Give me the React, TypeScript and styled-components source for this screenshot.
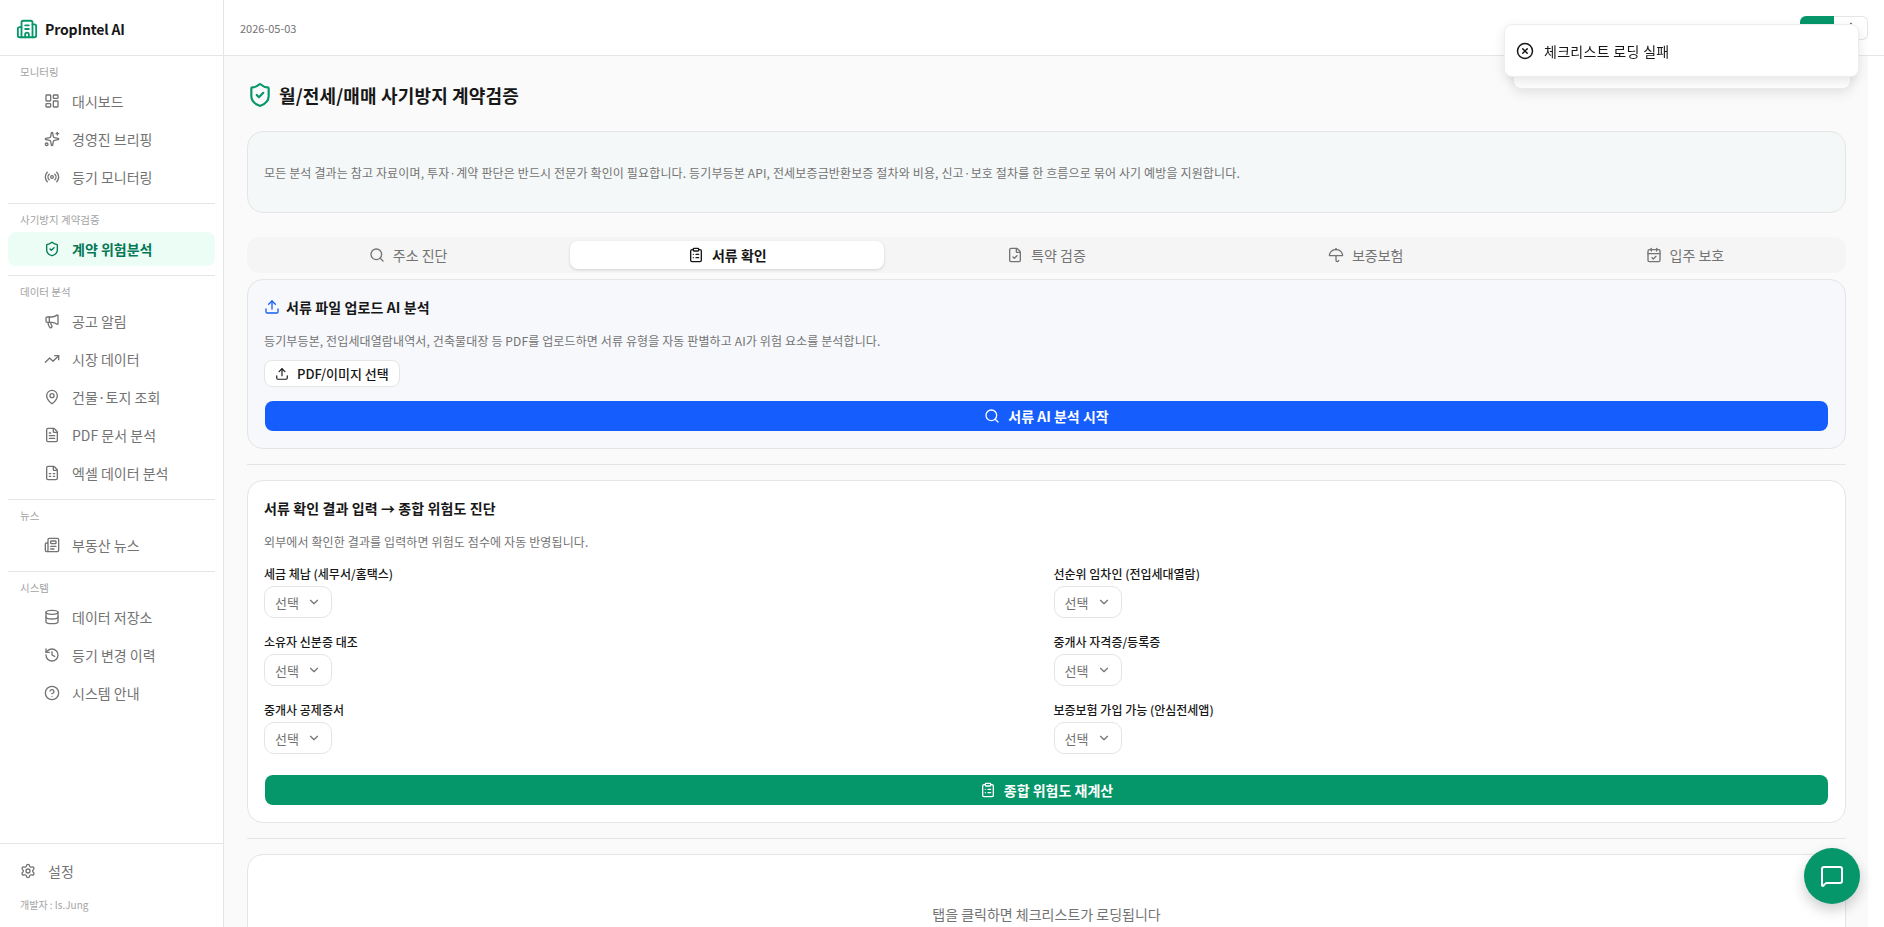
import styled, { createGlobalStyle } from 'styled-components'
import {
  Building2,
  CalendarCheck,
  ChevronDown,
  CircleHelp,
  CircleX,
  ClipboardList,
  Database,
  EllipsisVertical,
  FileCheck,
  FileSpreadsheet,
  FileText,
  History,
  LayoutDashboard,
  MapPin,
  Megaphone,
  MessageSquare,
  Newspaper,
  Radio,
  Search,
  Settings,
  ShieldCheck,
  Sparkles,
  TrendingUp,
  Umbrella,
  Upload,
} from 'lucide-react'

const GlobalStyle = createGlobalStyle`
  * {
    box-sizing: border-box;
  }
  html, body {
    margin: 0;
    height: 100%;
    overflow: hidden;
  }
  body {
    font-family: 'Noto Sans CJK KR', 'Noto Sans', sans-serif;
    background: #fff;
    color: #171717;
  }
`

const Shell = styled.div`
  display: flex;
  width: 1884px;
  height: 927px;
`

const Sidebar = styled.aside`
  flex: 0 0 224px;
  display: flex;
  flex-direction: column;
  border-right: 1px solid #e5e5e5;
  background: #fff;
`

const Brand = styled.div`
  flex: 0 0 56px;
  display: flex;
  align-items: center;
  gap: 7px;
  padding: 2px 0 0 16px;
  border-bottom: 1px solid #e5e5e5;
  font-size: 14px;
  font-weight: 600;
  letter-spacing: -0.15px;
  color: #171717;
  svg {
    color: #059669;
  }
`

const Nav = styled.nav`
  flex: 1;
`

const NavGroup = styled.div`
  display: flex;
  flex-direction: column;
  gap: 4px;
  margin: 0 8px;
  padding: 8px 0 9px;
  border-bottom: 1px solid #e5e5e5;
  &:last-child {
    border-bottom: none;
  }
`

const GroupLabel = styled.div`
  height: 16px;
  padding-left: 12px;
  font-size: 10.5px;
  line-height: 16px;
  color: #a3a3a3;
`

const NavItem = styled.a<{ $active?: boolean }>`
  display: flex;
  align-items: center;
  gap: 12px;
  height: 34px;
  padding-left: 36px;
  border-radius: 8px;
  font-size: 14px;
  font-weight: ${({ $active }) => ($active ? 600 : 400)};
  color: ${({ $active }) => ($active ? '#047857' : '#737373')};
  background: ${({ $active }) => ($active ? '#ecfdf5' : 'transparent')};
`

const SidebarFooter = styled.div`
  flex: 0 0 84px;
  padding: 10px 20px 0;
  border-top: 1px solid #e5e5e5;
`

const SettingsRow = styled.div`
  display: flex;
  align-items: center;
  gap: 12px;
  height: 34px;
  font-size: 14px;
  color: #737373;
`

const DevNote = styled.div`
  margin-top: 9px;
  font-size: 10px;
  line-height: 16px;
  color: #a3a3a3;
`

const Content = styled.div`
  flex: 1;
  min-width: 0;
  display: flex;
  flex-direction: column;
`

const TopBar = styled.header`
  flex: 0 0 56px;
  display: flex;
  align-items: flex-start;
  justify-content: space-between;
  padding: 16px 16px 0 16px;
  border-bottom: 1px solid #e5e5e5;
  background: #fff;
`

const DateText = styled.span`
  font-size: 11px;
  line-height: 24px;
  color: #737373;
`

const TopActions = styled.div`
  display: flex;
  height: 24px;
`

const GreenChip = styled.div`
  width: 34px;
  background: #059669;
  border-radius: 6px 0 0 6px;
`

const WhiteChip = styled.div`
  width: 34px;
  display: flex;
  align-items: center;
  justify-content: center;
  border: 1px solid #e5e5e5;
  border-left: none;
  border-radius: 0 6px 6px 0;
  color: #737373;
`

/* the right margin keeps the white strip where the page scrollbar sat */
const Main = styled.main`
  flex: 1;
  min-height: 0;
  overflow: hidden;
  margin-right: 16px;
  padding: 28px 22px 32px 23px;
  background: #fafafa;
`

const PageTitle = styled.h1`
  display: flex;
  align-items: center;
  gap: 6px;
  height: 22px;
  margin: 0;
  font-size: 18px;
  font-weight: 700;
  letter-spacing: 0.15px;
  color: #171717;
  svg {
    flex: none;
    color: #059669;
  }
`

const Notice = styled.div`
  display: flex;
  align-items: center;
  height: 82px;
  margin: 25px 0 24px;
  padding: 0 16px;
  border: 1px solid #e5e5e5;
  border-radius: 16px;
  background: #f5f8f8;
  font-size: 12px;
  letter-spacing: 0.14px;
  color: #737373;
`

const TabBar = styled.div`
  display: grid;
  grid-template-columns: repeat(5, 1fr);
  gap: 5px;
  height: 36px;
  padding: 4px;
  margin-bottom: 6px;
  border-radius: 12px;
  background: #f5f5f5;
`

const Tab = styled.div<{ $active?: boolean }>`
  display: flex;
  align-items: center;
  justify-content: center;
  gap: 8px;
  border-radius: 8px;
  font-size: 14px;
  font-weight: ${({ $active }) => ($active ? 600 : 400)};
  color: ${({ $active }) => ($active ? '#171717' : '#737373')};
  background: ${({ $active }) => ($active ? '#fff' : 'transparent')};
  box-shadow: ${({ $active }) => ($active ? '0 1px 3px rgba(0, 0, 0, 0.15)' : 'none')};
`

const Card = styled.section<{ $tint?: boolean }>`
  padding: 17px 16px;
  border: 1px solid #e5e5e5;
  border-radius: 16px;
  background: ${({ $tint }) => ($tint ? '#f6f8fc' : '#fff')};
`

const Divider = styled.hr`
  margin: 15px 0;
  border: none;
  border-top: 1px solid #e5e5e5;
`

const CardTitle = styled.h2`
  display: flex;
  align-items: center;
  gap: 6px;
  height: 20px;
  margin: 0;
  font-size: 14px;
  font-weight: 600;
  letter-spacing: 0.1px;
  color: #171717;
  svg {
    color: #155dfc;
  }
`

const CardText = styled.p`
  margin: 15px 0 0;
  font-size: 12px;
  line-height: 18px;
  letter-spacing: 0.12px;
  color: #737373;
`

const PickButton = styled.button`
  display: flex;
  align-items: center;
  gap: 8px;
  height: 27px;
  margin-top: 10px;
  padding: 0 10px;
  border: 1px solid #e5e5e5;
  border-radius: 8px;
  background: #fff;
  font-family: inherit;
  font-size: 13px;
  font-weight: 500;
  color: #171717;
`

const WideButton = styled.button<{ $color: string }>`
  display: flex;
  align-items: center;
  justify-content: center;
  gap: 8px;
  width: calc(100% - 2px);
  height: 30px;
  margin: 14px 1px 0;
  border: none;
  border-radius: 8px;
  background: ${({ $color }) => $color};
  font-family: inherit;
  font-size: 14px;
  font-weight: 600;
  color: #fff;
`

const CheckGrid = styled.div`
  display: grid;
  grid-template-columns: 1fr 1fr;
  column-gap: 14px;
  row-gap: 15px;
  margin: 14px 0 21px;
  & + ${WideButton} {
    margin-top: 0;
  }
`

const Field = styled.div`
  display: flex;
  flex-direction: column;
  align-items: flex-start;
  gap: 3px;
`

const FieldLabel = styled.label`
  font-size: 12px;
  font-weight: 500;
  line-height: 18px;
  color: #171717;
`

const SelectBox = styled.div`
  display: flex;
  align-items: center;
  justify-content: space-between;
  width: 68px;
  height: 32px;
  padding: 0 10px;
  border: 1px solid #e5e5e5;
  border-radius: 10px;
  background: #fff;
  font-size: 13px;
  color: #737373;
`

const EmptyCard = styled.section`
  padding: 49px 16px;
  border: 1px solid #e5e5e5;
  border-radius: 16px;
  background: #fff;
  text-align: center;
  font-size: 14px;
  line-height: 20px;
  color: #737373;
`

const ChatButton = styled.button`
  position: fixed;
  right: 24px;
  bottom: 23px;
  display: flex;
  align-items: center;
  justify-content: center;
  width: 56px;
  height: 56px;
  border: none;
  border-radius: 50%;
  background: #059669;
  color: #fff;
  box-shadow: 0 6px 14px rgba(0, 0, 0, 0.2);
`

const ToastBack = styled.div`
  position: fixed;
  top: 40px;
  left: 1513px;
  width: 338px;
  height: 49px;
  border: 1px solid #ededed;
  border-radius: 8px;
  background: #fff;
  box-shadow: 0 4px 12px rgba(0, 0, 0, 0.1);
`

const Toast = styled.div`
  position: fixed;
  top: 24px;
  left: 1504px;
  display: flex;
  align-items: center;
  gap: 10px;
  width: 355px;
  height: 53px;
  padding: 0 11px;
  border: 1px solid #ededed;
  border-radius: 8px;
  background: #fff;
  box-shadow: 0 4px 12px rgba(0, 0, 0, 0.1);
  font-size: 14px;
  letter-spacing: 0.3px;
  color: #171717;
`

const navGroups = [
  {
    label: '모니터링',
    items: [
      { name: '대시보드', icon: LayoutDashboard },
      { name: '경영진 브리핑', icon: Sparkles },
      { name: '등기 모니터링', icon: Radio },
    ],
  },
  {
    label: '사기방지 계약검증',
    items: [{ name: '계약 위험분석', icon: ShieldCheck, active: true }],
  },
  {
    label: '데이터 분석',
    items: [
      { name: '공고 알림', icon: Megaphone },
      { name: '시장 데이터', icon: TrendingUp },
      { name: '건물·토지 조회', icon: MapPin },
      { name: 'PDF 문서 분석', icon: FileText },
      { name: '엑셀 데이터 분석', icon: FileSpreadsheet },
    ],
  },
  {
    label: '뉴스',
    items: [{ name: '부동산 뉴스', icon: Newspaper }],
  },
  {
    label: '시스템',
    items: [
      { name: '데이터 저장소', icon: Database },
      { name: '등기 변경 이력', icon: History },
      { name: '시스템 안내', icon: CircleHelp },
    ],
  },
]

const tabs = [
  { name: '주소 진단', icon: Search },
  { name: '서류 확인', icon: ClipboardList, active: true },
  { name: '특약 검증', icon: FileCheck },
  { name: '보증보험', icon: Umbrella },
  { name: '입주 보호', icon: CalendarCheck },
]

const fields = [
  '세금 체납 (세무서/홈택스)',
  '선순위 임차인 (전입세대열람)',
  '소유자 신분증 대조',
  '중개사 자격증/등록증',
  '중개사 공제증서',
  '보증보험 가입 가능 (안심전세앱)',
]

export default function App() {
  return (
    <>
      <GlobalStyle />
      <Shell>
        <Sidebar>
          <Brand>
            <Building2 size={22} />
            PropIntel AI
          </Brand>
          <Nav>
            {navGroups.map((group) => (
              <NavGroup key={group.label}>
                <GroupLabel>{group.label}</GroupLabel>
                {group.items.map((item) => (
                  <NavItem key={item.name} $active={item.active}>
                    <item.icon size={16} />
                    {item.name}
                  </NavItem>
                ))}
              </NavGroup>
            ))}
          </Nav>
          <SidebarFooter>
            <SettingsRow>
              <Settings size={16} />
              설정
            </SettingsRow>
            <DevNote>개발자 : Is.Jung</DevNote>
          </SidebarFooter>
        </Sidebar>
        <Content>
          <TopBar>
            <DateText>2026-05-03</DateText>
            <TopActions>
              <GreenChip />
              <WhiteChip>
                <EllipsisVertical size={14} />
              </WhiteChip>
            </TopActions>
          </TopBar>
          <Main>
            <PageTitle>
              <ShieldCheck size={26} />
              월/전세/매매 사기방지 계약검증
            </PageTitle>
            <Notice>
              모든 분석 결과는 참고 자료이며, 투자·계약 판단은 반드시 전문가 확인이 필요합니다. 등기부등본 API,
              전세보증금반환보증 절차와 비용, 신고·보호 절차를 한 흐름으로 묶어 사기 예방을 지원합니다.
            </Notice>
            <TabBar>
              {tabs.map((tab) => (
                <Tab key={tab.name} $active={tab.active}>
                  <tab.icon size={16} />
                  {tab.name}
                </Tab>
              ))}
            </TabBar>
            <Card $tint>
              <CardTitle>
                <Upload size={16} />
                서류 파일 업로드 AI 분석
              </CardTitle>
              <CardText>
                등기부등본, 전입세대열람내역서, 건축물대장 등 PDF를 업로드하면 서류 유형을 자동 판별하고 AI가 위험
                요소를 분석합니다.
              </CardText>
              <PickButton>
                <Upload size={14} />
                PDF/이미지 선택
              </PickButton>
              <WideButton $color="#155dfc">
                <Search size={16} />
                서류 AI 분석 시작
              </WideButton>
            </Card>
            <Divider />
            <Card>
              <CardTitle>서류 확인 결과 입력 → 종합 위험도 진단</CardTitle>
              <CardText>외부에서 확인한 결과를 입력하면 위험도 점수에 자동 반영됩니다.</CardText>
              <CheckGrid>
                {fields.map((field) => (
                  <Field key={field}>
                    <FieldLabel>{field}</FieldLabel>
                    <SelectBox>
                      선택
                      <ChevronDown size={14} />
                    </SelectBox>
                  </Field>
                ))}
              </CheckGrid>
              <WideButton $color="#059669">
                <ClipboardList size={16} />
                종합 위험도 재계산
              </WideButton>
            </Card>
            <Divider />
            <EmptyCard>탭을 클릭하면 체크리스트가 로딩됩니다</EmptyCard>
          </Main>
        </Content>
      </Shell>
      <ToastBack />
      <Toast>
        <CircleX size={18} />
        체크리스트 로딩 실패
      </Toast>
      <ChatButton>
        <MessageSquare size={24} />
      </ChatButton>
    </>
  )
}
